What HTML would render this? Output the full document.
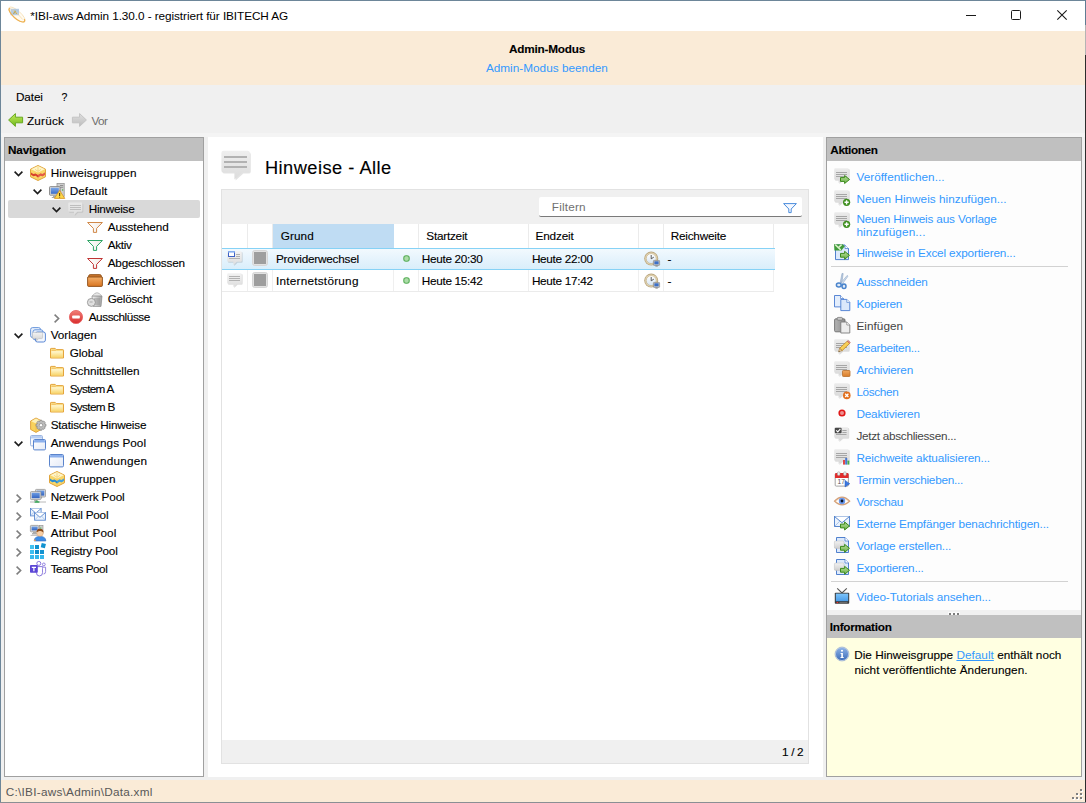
<!DOCTYPE html>
<html lang="de"><head><meta charset="utf-8"><title>IBI-aws Admin</title>
<style>
html,body{margin:0;padding:0;}
body{width:1086px;height:803px;overflow:hidden;background:#f0f0f0;font-family:"Liberation Sans", sans-serif;position:relative;}
.t{position:absolute;white-space:nowrap;}
.r{position:absolute;box-sizing:border-box;}
svg{overflow:visible;}
a{color:#3399ff;-webkit-text-stroke:0;}
</style></head>
<body>
<div class="r" style="left:0px;top:0px;width:1086px;height:803px;background:#f0f0f0;"></div>
<div class="r" style="left:0px;top:0px;width:1086px;height:31px;background:#ffffff;"></div>
<svg class="r" style="left:8px;top:6px;" width="18" height="18" viewBox="0 0 18 18"><ellipse cx="9" cy="8.6" rx="10.6" ry="3.7" transform="rotate(42 9 8.6)" fill="#fffaf0" stroke="#f6e0b4" stroke-width="0.8"/><rect x="2.6" y="2.8" width="8.4" height="6.4" fill="#a4c0de" opacity="0.8"/><path d="M5.6 8 L7 4.8 L8.6 8" fill="none" stroke="#b49830" stroke-width="0.9"/><path d="M1.8 2.6 Q-0.4 3 3.4 8.4 Q9 15.2 14.6 16 Q17.4 16 16.4 13.6" fill="none" stroke="#eeb050" stroke-width="1.2" stroke-linecap="round"/><path d="M3.6 3.2 Q9 6 14.6 13.4" fill="none" stroke="#f4d08c" stroke-width="0.7" opacity="0.8"/></svg>
<div class="t" id="t1" style="left:30.2px;top:9px;font-size:11.75px;line-height:13px;color:#000;-webkit-text-stroke:0.12px;letter-spacing:-0.064px;-webkit-text-stroke:0;">*IBI-aws Admin 1.30.0 - registriert für IBITECH AG</div>
<div class="r" style="left:966px;top:15px;width:10px;height:1px;background:#1a1a1a;"></div>
<div class="r" style="left:1011px;top:10px;width:10px;height:10px;background:transparent;border:1px solid #1a1a1a;border-radius:1.5px;"></div>
<svg class="r" style="left:1057px;top:10px;" width="10" height="10" viewBox="0 0 10 10"><path d="M0.3 0.3 L9.7 9.7 M9.7 0.3 L0.3 9.7" stroke="#1a1a1a" stroke-width="1.1" fill="none"/></svg>
<div class="r" style="left:0px;top:31px;width:1086px;height:54px;background:#faebd7;"></div>
<div class="t" id="t2" style="left:509.1px;top:42px;font-size:11.75px;line-height:13px;color:#000;font-weight:bold;-webkit-text-stroke:0.12px;letter-spacing:-0.212px;">Admin-Modus</div>
<div class="t" id="t3" style="left:485.9px;top:61px;font-size:11.75px;line-height:13px;color:#3399ff;letter-spacing:0.022px;">Admin-Modus beenden</div>
<div class="t" id="t4" style="left:15.9px;top:90px;font-size:11.75px;line-height:13px;color:#000;-webkit-text-stroke:0.12px;letter-spacing:-0.087px;">Datei</div>
<div class="t" id="t5" style="left:61.5px;top:91px;font-size:10.5px;line-height:12px;color:#000;-webkit-text-stroke:0.12px;">?</div>
<svg class="r" style="left:8px;top:113px;" width="15" height="14" viewBox="0 0 15 14"><defs><linearGradient id="g1" x1="0" y1="0" x2="0" y2="1"><stop offset="0" stop-color="#c8ec60"/><stop offset="1" stop-color="#6cb818"/></linearGradient></defs><path d="M0.6 7 L7.4 0.6 V4.2 H14.6 V9.8 H7.4 V13.4Z" fill="url(#g1)" stroke="#68a820" stroke-width="1" stroke-linejoin="round"/></svg>
<div class="t" id="t6" style="left:27.0px;top:114px;font-size:11.75px;line-height:13px;color:#000;-webkit-text-stroke:0.12px;letter-spacing:0.18px;">Zurück</div>
<svg class="r" style="left:72px;top:113px;" width="15" height="14" viewBox="0 0 15 14"><defs><linearGradient id="g2" x1="0" y1="0" x2="0" y2="1"><stop offset="0" stop-color="#e0e0e0"/><stop offset="1" stop-color="#bcbcbc"/></linearGradient></defs><path d="M14.4 7 L7.6 0.6 V4.2 H0.4 V9.8 H7.6 V13.4Z" fill="url(#g2)" stroke="#c4c4c4" stroke-width="1" stroke-linejoin="round"/></svg>
<div class="t" id="t7" style="left:91.4px;top:114px;font-size:11.75px;line-height:13px;color:#6d6d6d;letter-spacing:-0.614px;">Vor</div>
<div class="r" style="left:0px;top:133px;width:1086px;height:4px;background:#f4f4f4;"></div>
<div class="r" style="left:4px;top:137px;width:200px;height:640px;background:#ffffff;border:1px solid #a0a0a0;"></div>
<div class="r" style="left:5px;top:138px;width:198px;height:23px;background:#c0c0c0;"></div>
<div class="t" id="t8" style="left:8.1px;top:143px;font-size:11.75px;line-height:13px;color:#000;font-weight:bold;-webkit-text-stroke:0.12px;letter-spacing:-0.236px;">Navigation</div>
<div class="r" style="left:8px;top:200px;width:192px;height:18px;background:#d9d9d9;border-radius:2px;"></div>
<svg class="r" style="left:14px;top:171px;" width="9" height="6" viewBox="0 0 9 6"><path d="M0.6 0.6 L4.5 4.5 L8.4 0.6" fill="none" stroke="#1c1c1c" stroke-width="1.6"/></svg>
<svg class="r" style="left:30px;top:165px;" width="16" height="16" viewBox="0 0 16 16"><path d="M8 0.5 L15.5 4.2 V11.8 L8 15.5 L0.5 11.8 V4.2Z" fill="#f9d668" stroke="#e0a43c" stroke-width="1" stroke-linejoin="round"/><path d="M8 1 L14.8 4.3 L8 7.6 L1.2 4.3Z" fill="#fef4c8"/><path d="M8 7.8 V15" stroke="#ecbc50" stroke-width="0.6"/><path d="M1 7.6 L3.3 9 L5.6 8.5 L8 10 L10.4 8.5 L12.7 9 L15 7.6 V9.8 L12.7 11.3 L10.4 10.8 L8 12.4 L5.6 10.8 L3.3 11.3 L1 9.8Z" fill="#d8402e"/><path d="M8 10 L10.4 8.5 L12.7 9 L15 7.6 V9.8 L12.7 11.3 L10.4 10.8 L8 12.4Z" fill="#ee7060" opacity="0.55"/><path d="M8 1.6 V6.4 M5 4.3 L8 6.4 L11 4.3" stroke="#f2cc6c" stroke-width="0.7" fill="none"/></svg>
<div class="t" id="t9" style="left:50.7px;top:166px;font-size:11.75px;line-height:13px;color:#000;-webkit-text-stroke:0.12px;letter-spacing:0.119px;">Hinweisgruppen</div>
<svg class="r" style="left:33px;top:189px;" width="9" height="6" viewBox="0 0 9 6"><path d="M0.6 0.6 L4.5 4.5 L8.4 0.6" fill="none" stroke="#1c1c1c" stroke-width="1.6"/></svg>
<svg class="r" style="left:49px;top:183px;" width="16" height="16" viewBox="0 0 16 16"><defs><linearGradient id="g3" x1="0" y1="0" x2="0" y2="1"><stop offset="0" stop-color="#7ca8e8"/><stop offset="1" stop-color="#3c6cc8"/></linearGradient></defs><rect x="8" y="0.5" width="7.2" height="13" fill="#cfcfcf" stroke="#8c8c8c" stroke-width="0.7"/><rect x="11" y="2" width="3.2" height="0.9" fill="#888"/><rect x="11" y="3.8" width="3.2" height="0.9" fill="#888"/><rect x="13" y="6.4" width="1.2" height="1.2" fill="#40b040"/><rect x="0.5" y="3.6" width="10.6" height="8.6" rx="0.8" fill="#d8d8d8" stroke="#7a7a7a" stroke-width="0.8"/><rect x="1.8" y="4.8" width="8" height="6" fill="url(#g3)"/><path d="M4 12.4 H7.6 V14 H9 V15 H2.8 V14 H4Z" fill="#a8a8a8"/><path d="M10.6 7.4 L15.8 15.4 H5.4Z" fill="#fcd848" stroke="#d89020" stroke-width="0.8" stroke-linejoin="round"/><path d="M10.6 10 V13 M10.6 13.8 V14.6" stroke="#5a3c00" stroke-width="1.1"/></svg>
<div class="t" id="t10" style="left:69.7px;top:184px;font-size:11.75px;line-height:13px;color:#000;-webkit-text-stroke:0.12px;letter-spacing:0.078px;">Default</div>
<svg class="r" style="left:52px;top:207px;" width="9" height="6" viewBox="0 0 9 6"><path d="M0.6 0.6 L4.5 4.5 L8.4 0.6" fill="none" stroke="#1c1c1c" stroke-width="1.6"/></svg>
<svg class="r" style="left:68px;top:201px;" width="16" height="16" viewBox="0 0 16 16"><defs><linearGradient id="g4" x1="0" y1="0" x2="0" y2="1"><stop offset="0" stop-color="#e9e9e9"/><stop offset="1" stop-color="#dfdfdf"/></linearGradient></defs><path d="M2 2.4 H14.2 Q15.299999999999999 2.4 15.299999999999999 3.6 V10.6 Q15.299999999999999 11.8 14.2 11.8 H10.200000000000001 L6.8 15.0 V11.8 H2 Q0.9 11.8 0.9 10.6 V3.6 Q0.9 2.4 2 2.4Z" fill="#000" opacity="0.09"/><path d="M1.4 1.5999999999999999 H13.2 Q14.4 1.5999999999999999 14.4 2.8 V9.6 Q14.4 10.8 13.2 10.8 H9.4 L6 14.0 V10.8 H1.4 Q0.2 10.8 0.2 9.6 V2.8 Q0.2 1.5999999999999999 1.4 1.5999999999999999Z" fill="url(#g4)"/><rect x="2" y="4.0" width="11" height="1" fill="#bebebe"/><rect x="2" y="6.0" width="11" height="1" fill="#bebebe"/><rect x="2" y="8.0" width="11" height="1" fill="#bebebe"/></svg>
<div class="t" id="t11" style="left:88.7px;top:202px;font-size:11.75px;line-height:13px;color:#000;-webkit-text-stroke:0.12px;letter-spacing:-0.225px;">Hinweise</div>
<svg class="r" style="left:87px;top:219px;" width="16" height="16" viewBox="0 0 16 16"><defs><linearGradient id="g5" x1="0" y1="0" x2="1" y2="0"><stop offset="0" stop-color="#ffffff"/><stop offset="1" stop-color="#f2ece6"/></linearGradient></defs><path d="M0.6 3.5 H15.4 L9.6 9.4 V13.4 H6.4 V9.4Z" fill="url(#g5)" stroke="#d08848" stroke-width="1" stroke-linejoin="round"/></svg>
<div class="t" id="t12" style="left:107.7px;top:220px;font-size:11.75px;line-height:13px;color:#000;-webkit-text-stroke:0.12px;letter-spacing:-0.112px;">Ausstehend</div>
<svg class="r" style="left:87px;top:237px;" width="16" height="16" viewBox="0 0 16 16"><defs><linearGradient id="g6" x1="0" y1="0" x2="1" y2="0"><stop offset="0" stop-color="#ffffff"/><stop offset="1" stop-color="#f2ece6"/></linearGradient></defs><path d="M0.6 3.5 H15.4 L9.6 9.4 V13.4 H6.4 V9.4Z" fill="url(#g6)" stroke="#2ca464" stroke-width="1" stroke-linejoin="round"/></svg>
<div class="t" id="t13" style="left:107.7px;top:238px;font-size:11.75px;line-height:13px;color:#000;-webkit-text-stroke:0.12px;letter-spacing:-0.335px;">Aktiv</div>
<svg class="r" style="left:87px;top:255px;" width="16" height="16" viewBox="0 0 16 16"><defs><linearGradient id="g7" x1="0" y1="0" x2="1" y2="0"><stop offset="0" stop-color="#ffffff"/><stop offset="1" stop-color="#f2ece6"/></linearGradient></defs><path d="M0.6 3.5 H15.4 L9.6 9.4 V13.4 H6.4 V9.4Z" fill="url(#g7)" stroke="#c03434" stroke-width="1" stroke-linejoin="round"/></svg>
<div class="t" id="t14" style="left:107.7px;top:256px;font-size:11.75px;line-height:13px;color:#000;-webkit-text-stroke:0.12px;letter-spacing:-0.19px;">Abgeschlossen</div>
<svg class="r" style="left:87px;top:273px;" width="16" height="16" viewBox="0 0 16 16"><defs><linearGradient id="g8" x1="0" y1="0" x2="0" y2="1"><stop offset="0" stop-color="#f4b06a"/><stop offset="1" stop-color="#d87420"/></linearGradient></defs><path d="M1.6 3.2 Q1.6 1.6 3.2 1.6 H12.8 Q14.4 1.6 14.4 3.2 L15.4 4.6 H0.6Z" fill="#c8742c" stroke="#8c4c14" stroke-width="0.8"/><rect x="0.6" y="4" width="14.8" height="9.4" rx="1" fill="url(#g8)" stroke="#8c4c14" stroke-width="0.9"/></svg>
<div class="t" id="t15" style="left:107.7px;top:274px;font-size:11.75px;line-height:13px;color:#000;-webkit-text-stroke:0.12px;letter-spacing:-0.176px;">Archiviert</div>
<svg class="r" style="left:87px;top:291px;" width="16" height="16" viewBox="0 0 16 16"><defs><linearGradient id="g9" x1="0" y1="0" x2="1" y2="0"><stop offset="0" stop-color="#f4f4f4"/><stop offset="0.5" stop-color="#c8c8c8"/><stop offset="1" stop-color="#a0a0a0"/></linearGradient></defs><path d="M5 5 H15 L14 15.4 H6Z" fill="url(#g9)" stroke="#8a8a8a" stroke-width="0.7"/><path d="M8 7 V14 M10 7 V14 M12 7 V14" stroke="#8c8c8c" stroke-width="0.8"/><path d="M5.4 4.8 Q10 -1.4 14.6 4.8Z" fill="#e8e8e8" stroke="#9a9a9a" stroke-width="0.6"/><ellipse cx="4.4" cy="11.4" rx="4" ry="4" fill="#e0e0e0" stroke="#8c8c8c" stroke-width="0.8"/><path d="M2.6 11 H5.6" stroke="#a8a8a8" stroke-width="1"/></svg>
<div class="t" id="t16" style="left:107.7px;top:292px;font-size:11.75px;line-height:13px;color:#000;-webkit-text-stroke:0.12px;letter-spacing:-0.27px;">Gelöscht</div>
<svg class="r" style="left:54px;top:314px;" width="6" height="9" viewBox="0 0 6 9"><path d="M0.6 0.7 L4.6 4.5 L0.6 8.3" fill="none" stroke="#7e7e7e" stroke-width="1.6"/></svg>
<svg class="r" style="left:69px;top:310px;" width="14" height="14" viewBox="0 0 14 14"><defs><linearGradient id="g10" x1="0" y1="0" x2="0" y2="1"><stop offset="0" stop-color="#f08078"/><stop offset="1" stop-color="#d82c2c"/></linearGradient></defs><circle cx="7" cy="7" r="6.6" fill="url(#g10)" stroke="#e86060" stroke-width="0.8"/><rect x="3.2" y="5.6" width="7.6" height="2.8" rx="0.6" fill="#fff"/></svg>
<div class="t" id="t17" style="left:88.7px;top:310px;font-size:11.75px;line-height:13px;color:#000;-webkit-text-stroke:0.12px;letter-spacing:-0.433px;">Ausschlüsse</div>
<svg class="r" style="left:14px;top:333px;" width="9" height="6" viewBox="0 0 9 6"><path d="M0.6 0.6 L4.5 4.5 L8.4 0.6" fill="none" stroke="#1c1c1c" stroke-width="1.6"/></svg>
<svg class="r" style="left:30px;top:327px;" width="16" height="16" viewBox="0 0 16 16"><defs><linearGradient id="g11" x1="0" y1="0" x2="0" y2="1"><stop offset="0" stop-color="#f4f4f4"/><stop offset="1" stop-color="#cfcfcf"/></linearGradient></defs><rect x="0.6" y="0.6" width="10" height="10" rx="2" fill="#e8f0fc" stroke="#5a8cd8" stroke-width="0.9"/><rect x="3" y="2.8" width="10" height="10" rx="2" fill="#e8f0fc" stroke="#5a8cd8" stroke-width="0.9"/><rect x="5.4" y="5" width="10" height="10" rx="2" fill="#f4f8fe" stroke="#4a7cd0" stroke-width="0.9"/><path d="M3.4 5.4 H11.6 Q12.6 5.4 12.6 6.4 V10.6 Q12.6 11.6 11.6 11.6 H8.6 L6.6 13.8 V11.6 H3.4 Q2.4 11.6 2.4 10.6 V6.4 Q2.4 5.4 3.4 5.4Z" fill="url(#g11)" stroke="#b0b0b0" stroke-width="0.5"/></svg>
<div class="t" id="t18" style="left:50.7px;top:328px;font-size:11.75px;line-height:13px;color:#000;-webkit-text-stroke:0.12px;letter-spacing:-0.054px;">Vorlagen</div>
<svg class="r" style="left:49px;top:345px;" width="16" height="16" viewBox="0 0 16 16"><defs><linearGradient id="g12" x1="0" y1="0" x2="0" y2="1"><stop offset="0" stop-color="#fff8d4"/><stop offset="1" stop-color="#f8d468"/></linearGradient></defs><path d="M1.5 4 Q1.5 3.4 2.1 3.4 H6.2 L7.4 4.6 H13.8 Q14.5 4.6 14.5 5.2 V13 H1.5Z" fill="#fbe08c" stroke="#e4a43c" stroke-width="1" stroke-linejoin="round"/><rect x="2.3" y="6.2" width="11.4" height="6.3" fill="url(#g12)"/><path d="M2.6 5.3 H6.8" stroke="#eeb858" stroke-width="0.8"/></svg>
<div class="t" id="t19" style="left:69.7px;top:346px;font-size:11.75px;line-height:13px;color:#000;-webkit-text-stroke:0.12px;letter-spacing:-0.095px;">Global</div>
<svg class="r" style="left:49px;top:363px;" width="16" height="16" viewBox="0 0 16 16"><defs><linearGradient id="g13" x1="0" y1="0" x2="0" y2="1"><stop offset="0" stop-color="#fff8d4"/><stop offset="1" stop-color="#f8d468"/></linearGradient></defs><path d="M1.5 4 Q1.5 3.4 2.1 3.4 H6.2 L7.4 4.6 H13.8 Q14.5 4.6 14.5 5.2 V13 H1.5Z" fill="#fbe08c" stroke="#e4a43c" stroke-width="1" stroke-linejoin="round"/><rect x="2.3" y="6.2" width="11.4" height="6.3" fill="url(#g13)"/><path d="M2.6 5.3 H6.8" stroke="#eeb858" stroke-width="0.8"/></svg>
<div class="t" id="t20" style="left:69.7px;top:364px;font-size:11.75px;line-height:13px;color:#000;-webkit-text-stroke:0.12px;letter-spacing:0.003px;">Schnittstellen</div>
<svg class="r" style="left:49px;top:381px;" width="16" height="16" viewBox="0 0 16 16"><defs><linearGradient id="g14" x1="0" y1="0" x2="0" y2="1"><stop offset="0" stop-color="#fff8d4"/><stop offset="1" stop-color="#f8d468"/></linearGradient></defs><path d="M1.5 4 Q1.5 3.4 2.1 3.4 H6.2 L7.4 4.6 H13.8 Q14.5 4.6 14.5 5.2 V13 H1.5Z" fill="#fbe08c" stroke="#e4a43c" stroke-width="1" stroke-linejoin="round"/><rect x="2.3" y="6.2" width="11.4" height="6.3" fill="url(#g14)"/><path d="M2.6 5.3 H6.8" stroke="#eeb858" stroke-width="0.8"/></svg>
<div class="t" id="t21" style="left:69.7px;top:382px;font-size:11.75px;line-height:13px;color:#000;-webkit-text-stroke:0.12px;letter-spacing:-0.694px;">System A</div>
<svg class="r" style="left:49px;top:399px;" width="16" height="16" viewBox="0 0 16 16"><defs><linearGradient id="g15" x1="0" y1="0" x2="0" y2="1"><stop offset="0" stop-color="#fff8d4"/><stop offset="1" stop-color="#f8d468"/></linearGradient></defs><path d="M1.5 4 Q1.5 3.4 2.1 3.4 H6.2 L7.4 4.6 H13.8 Q14.5 4.6 14.5 5.2 V13 H1.5Z" fill="#fbe08c" stroke="#e4a43c" stroke-width="1" stroke-linejoin="round"/><rect x="2.3" y="6.2" width="11.4" height="6.3" fill="url(#g15)"/><path d="M2.6 5.3 H6.8" stroke="#eeb858" stroke-width="0.8"/></svg>
<div class="t" id="t22" style="left:69.7px;top:400px;font-size:11.75px;line-height:13px;color:#000;-webkit-text-stroke:0.12px;letter-spacing:-0.66px;">System B</div>
<svg class="r" style="left:30px;top:417px;" width="16" height="16" viewBox="0 0 16 16"><path d="M6 1 L11 3.6 V12.6 L6 15.4 L0.6 12.4 V4Z" fill="#f8d25c" stroke="#dc9c34" stroke-width="0.9" stroke-linejoin="round"/><path d="M6 1.4 L10.4 3.8 L6 6.4 L1.2 4.2Z" fill="#fdf0b8"/><path d="M6 6.4 V15" stroke="#e8b448" stroke-width="0.6"/><g transform="translate(11,8.2)"><path d="M-1 -5 H1 L1.4 -3.6 L2.8 -4.2 L4.2 -2.8 L3.6 -1.4 L5 -1 V1 L3.6 1.4 L4.2 2.8 L2.8 4.2 L1.4 3.6 L1 5 H-1 L-1.4 3.6 L-2.8 4.2 L-4.2 2.8 L-3.6 1.4 L-5 1 V-1 L-3.6 -1.4 L-4.2 -2.8 L-2.8 -4.2 L-1.4 -3.6Z" fill="#bcbcbc" stroke="#7c7c7c" stroke-width="0.6"/><circle r="1.7" fill="#fff" stroke="#7c7c7c" stroke-width="0.6"/></g></svg>
<div class="t" id="t23" style="left:50.7px;top:418px;font-size:11.75px;line-height:13px;color:#000;-webkit-text-stroke:0.12px;letter-spacing:-0.208px;">Statische Hinweise</div>
<svg class="r" style="left:14px;top:441px;" width="9" height="6" viewBox="0 0 9 6"><path d="M0.6 0.6 L4.5 4.5 L8.4 0.6" fill="none" stroke="#1c1c1c" stroke-width="1.6"/></svg>
<svg class="r" style="left:30px;top:435px;" width="16" height="16" viewBox="0 0 16 16"><defs><linearGradient id="g16" x1="0" y1="0" x2="1" y2="1"><stop offset="0" stop-color="#ffffff"/><stop offset="1" stop-color="#e4eaf6"/></linearGradient></defs><g opacity="0.6"><rect x="0.5" y="0.5" width="12" height="10.4" rx="1.2" fill="url(#g16)" stroke="#5a84cc" stroke-width="1"/><path d="M1.0 3.4 V1.9 Q1.0 1.0 1.9 1.0 H11.1 Q12.0 1.0 12.0 1.9 V3.4Z" fill="#8cb0ec"/></g><defs><linearGradient id="g17" x1="0" y1="0" x2="1" y2="1"><stop offset="0" stop-color="#ffffff"/><stop offset="1" stop-color="#e4eaf6"/></linearGradient></defs><g opacity="1"><rect x="3.5" y="4.5" width="12" height="10.4" rx="1.2" fill="url(#g17)" stroke="#5a84cc" stroke-width="1"/><path d="M4.0 7.4 V5.9 Q4.0 5.0 4.9 5.0 H14.1 Q15.0 5.0 15.0 5.9 V7.4Z" fill="#8cb0ec"/></g></svg>
<div class="t" id="t24" style="left:50.7px;top:436px;font-size:11.75px;line-height:13px;color:#000;-webkit-text-stroke:0.12px;letter-spacing:0.045px;">Anwendungs Pool</div>
<svg class="r" style="left:49px;top:453px;" width="16" height="16" viewBox="0 0 16 16"><defs><linearGradient id="g18" x1="0" y1="0" x2="1" y2="1"><stop offset="0" stop-color="#ffffff"/><stop offset="1" stop-color="#e4eaf6"/></linearGradient></defs><g opacity="1"><rect x="0.5" y="1.5" width="14" height="12.4" rx="1.2" fill="url(#g18)" stroke="#5a84cc" stroke-width="1"/><path d="M1.0 4.4 V2.9 Q1.0 2.0 1.9 2.0 H13.1 Q14.0 2.0 14.0 2.9 V4.4Z" fill="#8cb0ec"/></g></svg>
<div class="t" id="t25" style="left:69.7px;top:454px;font-size:11.75px;line-height:13px;color:#000;-webkit-text-stroke:0.12px;letter-spacing:0.216px;">Anwendungen</div>
<svg class="r" style="left:49px;top:471px;" width="16" height="16" viewBox="0 0 16 16"><path d="M8 0.5 L15.5 4.2 V11.8 L8 15.5 L0.5 11.8 V4.2Z" fill="#f9d668" stroke="#e0a43c" stroke-width="1" stroke-linejoin="round"/><path d="M8 1 L14.8 4.3 L8 7.6 L1.2 4.3Z" fill="#fef4c8"/><path d="M8 7.8 V15" stroke="#ecbc50" stroke-width="0.6"/><path d="M1 7.6 L3.3 9 L5.6 8.5 L8 10 L10.4 8.5 L12.7 9 L15 7.6 V9.8 L12.7 11.3 L10.4 10.8 L8 12.4 L5.6 10.8 L3.3 11.3 L1 9.8Z" fill="#2c8cd0"/><path d="M8 10 L10.4 8.5 L12.7 9 L15 7.6 V9.8 L12.7 11.3 L10.4 10.8 L8 12.4Z" fill="#58b0e8" opacity="0.55"/><path d="M8 1.6 V6.4 M5 4.3 L8 6.4 L11 4.3" stroke="#f2cc6c" stroke-width="0.7" fill="none"/></svg>
<div class="t" id="t26" style="left:69.7px;top:472px;font-size:11.75px;line-height:13px;color:#000;-webkit-text-stroke:0.12px;letter-spacing:0.006px;">Gruppen</div>
<svg class="r" style="left:16px;top:494px;" width="6" height="9" viewBox="0 0 6 9"><path d="M0.6 0.7 L4.6 4.5 L0.6 8.3" fill="none" stroke="#7e7e7e" stroke-width="1.6"/></svg>
<svg class="r" style="left:30px;top:489px;" width="16" height="16" viewBox="0 0 16 16"><defs><linearGradient id="g19" x1="0" y1="0" x2="0" y2="1"><stop offset="0" stop-color="#6c9ce4"/><stop offset="1" stop-color="#3464c0"/></linearGradient></defs><rect x="5.5" y="0.4" width="10" height="7.6" rx="0.8" fill="#dcdcdc" stroke="#8c8c8c" stroke-width="0.7"/><rect x="6.7" y="1.6" width="7.6" height="5.0" fill="url(#g19)"/><rect x="8.9" y="8.0" width="3.2" height="1.4" fill="#a8a8a8"/><defs><linearGradient id="g20" x1="0" y1="0" x2="0" y2="1"><stop offset="0" stop-color="#6c9ce4"/><stop offset="1" stop-color="#3464c0"/></linearGradient></defs><rect x="0.5" y="2.6" width="10.4" height="8" rx="0.8" fill="#dcdcdc" stroke="#8c8c8c" stroke-width="0.7"/><rect x="1.7" y="3.8" width="8.0" height="5.4" fill="url(#g20)"/><rect x="4.1" y="10.6" width="3.2" height="1.4" fill="#a8a8a8"/><path d="M0 13 H16" stroke="#b8b8b8" stroke-width="1"/><path d="M7 11.6 V13 M4.6 13 H9.4" stroke="#38a858" stroke-width="1.4"/></svg>
<div class="t" id="t27" style="left:50.7px;top:490px;font-size:11.75px;line-height:13px;color:#000;-webkit-text-stroke:0.12px;letter-spacing:-0.149px;">Netzwerk Pool</div>
<svg class="r" style="left:16px;top:512px;" width="6" height="9" viewBox="0 0 6 9"><path d="M0.6 0.7 L4.6 4.5 L0.6 8.3" fill="none" stroke="#7e7e7e" stroke-width="1.6"/></svg>
<svg class="r" style="left:30px;top:507px;" width="16" height="16" viewBox="0 0 16 16"><rect x="0.5" y="1.5" width="10.6" height="7.4" fill="#eaf2fc" stroke="#4a7cc8" stroke-width="0.8"/><path d="M0.5 1.5 L5.8 6.088 L11.1 1.5" fill="#fff" stroke="#4a7cc8" stroke-width="0.8"/><path d="M0.5 8.9 L4.316 4.83 M11.1 8.9 L7.284 4.83" fill="none" stroke="#8fb2e4" stroke-width="0.6400000000000001"/><rect x="4.6" y="5.6" width="10.8" height="7.6" fill="#eaf2fc" stroke="#4a7cc8" stroke-width="0.8"/><path d="M4.6 5.6 L10.0 10.312 L15.4 5.6" fill="#fff" stroke="#4a7cc8" stroke-width="0.8"/><path d="M4.6 13.2 L8.488 9.02 M15.4 13.2 L11.512 9.02" fill="none" stroke="#8fb2e4" stroke-width="0.6400000000000001"/></svg>
<div class="t" id="t28" style="left:50.7px;top:508px;font-size:11.75px;line-height:13px;color:#000;-webkit-text-stroke:0.12px;letter-spacing:-0.222px;">E-Mail Pool</div>
<svg class="r" style="left:16px;top:530px;" width="6" height="9" viewBox="0 0 6 9"><path d="M0.6 0.7 L4.6 4.5 L0.6 8.3" fill="none" stroke="#7e7e7e" stroke-width="1.6"/></svg>
<svg class="r" style="left:30px;top:525px;" width="16" height="16" viewBox="0 0 16 16"><defs><linearGradient id="g21" x1="0" y1="0" x2="0" y2="1"><stop offset="0" stop-color="#6c9ce4"/><stop offset="1" stop-color="#3464c0"/></linearGradient></defs><rect x="0.4" y="0.4" width="8.4" height="6.4" rx="0.8" fill="#dcdcdc" stroke="#8c8c8c" stroke-width="0.7"/><rect x="1.6" y="1.6" width="6.0" height="3.8000000000000003" fill="url(#g21)"/><rect x="3.0000000000000004" y="6.800000000000001" width="3.2" height="1.4" fill="#a8a8a8"/><rect x="9.6" y="0.4" width="3.4" height="8" fill="#d0d0d0" stroke="#8c8c8c" stroke-width="0.6"/><rect x="2" y="8.2" width="5" height="1.2" fill="#9c9c9c"/><rect x="0.6" y="9.8" width="7" height="1.2" fill="#c4c4c4"/><path d="M4.2 16 Q4.2 11.4 10 11.4 Q15.8 11.4 15.8 16Z" fill="#3c8ce8" stroke="#2868c0" stroke-width="0.6"/><circle cx="10" cy="8" r="3.3" fill="#f8d0a8" stroke="#c89060" stroke-width="0.4"/><path d="M6.6 7.6 Q6.4 3.6 10 3.8 Q13.8 3.8 13.4 7.6 Q12 5.8 10 6 Q8 5.8 6.6 7.6Z" fill="#8c4c1c"/><path d="M10 3.6 L11 1.8 L11.4 3.8Z" fill="#40b040"/><rect x="4" y="14.6" width="1.6" height="1.4" fill="#f0a050"/></svg>
<div class="t" id="t29" style="left:50.7px;top:526px;font-size:11.75px;line-height:13px;color:#000;-webkit-text-stroke:0.12px;letter-spacing:0.139px;">Attribut Pool</div>
<svg class="r" style="left:16px;top:548px;" width="6" height="9" viewBox="0 0 6 9"><path d="M0.6 0.7 L4.6 4.5 L0.6 8.3" fill="none" stroke="#7e7e7e" stroke-width="1.6"/></svg>
<svg class="r" style="left:30px;top:543px;" width="16" height="16" viewBox="0 0 16 16"><rect x="0" y="2" width="4" height="4" fill="#44c2f1"/><rect x="5" y="2" width="4" height="4" fill="#1192d0"/><rect x="0" y="7" width="4" height="4" fill="#3fbef0"/><rect x="5" y="7" width="4" height="4" fill="#0f8ecc"/><rect x="10" y="7" width="4" height="4" fill="#1593d0"/><rect x="0" y="12" width="4" height="4" fill="#3ab9ee"/><rect x="5" y="12" width="4" height="4" fill="#34b5ec"/><rect x="10" y="12" width="4" height="4" fill="#36b7ec"/><rect x="11.2" y="0.5" width="4.3" height="4.3" fill="#1192d0" transform="rotate(14 13.3 2.6)"/></svg>
<div class="t" id="t30" style="left:50.7px;top:544px;font-size:11.75px;line-height:13px;color:#000;-webkit-text-stroke:0.12px;letter-spacing:-0.235px;">Registry Pool</div>
<svg class="r" style="left:16px;top:566px;" width="6" height="9" viewBox="0 0 6 9"><path d="M0.6 0.7 L4.6 4.5 L0.6 8.3" fill="none" stroke="#7e7e7e" stroke-width="1.6"/></svg>
<svg class="r" style="left:30px;top:561px;" width="16" height="16" viewBox="0 0 16 16"><circle cx="8.8" cy="2.4" r="2" fill="#fff" stroke="#7c68d8" stroke-width="0.9"/><circle cx="13.8" cy="3.4" r="1.4" fill="#fff" stroke="#7c68d8" stroke-width="0.8"/><path d="M6.4 5.6 H12.6 V11.4 Q12.6 15 9.4 15 Q6.4 15 6.4 11.4Z" fill="#fff" stroke="#7c68d8" stroke-width="0.9"/><path d="M12.6 6.2 H15.6 V10.6 Q15.6 13 13.6 13" fill="#fff" stroke="#7c68d8" stroke-width="0.8"/><rect x="0" y="4" width="7.8" height="7.8" rx="0.8" fill="#5b45d6"/><path d="M1.8 5.8 H6 V7 H4.5 V10.2 H3.3 V7 H1.8Z" fill="#fff"/></svg>
<div class="t" id="t31" style="left:50.7px;top:562px;font-size:11.75px;line-height:13px;color:#000;-webkit-text-stroke:0.12px;letter-spacing:-0.478px;">Teams Pool</div>
<div class="r" style="left:208px;top:137px;width:615px;height:640px;background:#ffffff;"></div>
<svg class="r" style="left:221px;top:150px;" width="31" height="31" viewBox="0 0 31 31"><defs><linearGradient id="g22" x1="0" y1="0" x2="0" y2="1"><stop offset="0" stop-color="#efefef"/><stop offset="1" stop-color="#dcdcdc"/></linearGradient></defs><path d="M3 2.2 H27.6 Q29.8 2.2 29.8 4.4 V21.4 Q29.8 23.6 27.6 23.6 H22.4 L14.6 30.4 V23.6 H3.4 Q1.6 23.6 1.6 21.4 V4.4 Q1.6 2.2 3 2.2Z" fill="#000" opacity="0.11"/><path d="M2.6 0.8 H26.6 Q28.8 0.8 28.8 3 V20.4 Q28.8 22.6 26.6 22.6 H21.2 L13.4 29.6 V22.6 H2.6 Q0.4 22.6 0.4 20.4 V3 Q0.4 0.8 2.6 0.8Z" fill="url(#g22)"/><rect x="3" y="6" width="23" height="2" fill="#b2b2b2"/><rect x="3" y="11" width="23" height="2" fill="#b2b2b2"/><rect x="3" y="16" width="23" height="2" fill="#b2b2b2"/></svg>
<div class="t" id="t32" style="left:264.9px;top:157px;font-size:18.25px;line-height:21px;color:#000;-webkit-text-stroke:0.12px;letter-spacing:0.477px;">Hinweise - Alle</div>
<div class="r" style="left:221px;top:189px;width:588px;height:575px;background:#ffffff;border:1px solid #e2e2e2;"></div>
<div class="r" style="left:222px;top:190px;width:586px;height:34px;background:#f0f0f0;"></div>
<div class="r" style="left:539px;top:197px;width:263px;height:20px;background:#ffffff;border-bottom:1px solid #7a7a7a;border-radius:2px;"></div>
<div class="t" id="t33" style="left:551.8px;top:200px;font-size:11.75px;line-height:13px;color:#707070;letter-spacing:0.18px;">Filtern</div>
<svg class="r" style="left:783px;top:203px;" width="14" height="10" viewBox="0 0 14 10"><path d="M0.6 0.6 H13.4 L8.2 6 V9.6 H5.8 V6Z" fill="#f4f8ff" stroke="#4a8cdc" stroke-width="1" stroke-linejoin="round"/></svg>
<div class="r" style="left:273px;top:224px;width:121px;height:24px;background:#bfdcf3;"></div>
<div class="r" style="left:247px;top:224px;width:1px;height:24px;background:#ebebeb;"></div>
<div class="r" style="left:272px;top:224px;width:1px;height:24px;background:#ebebeb;"></div>
<div class="r" style="left:418px;top:224px;width:1px;height:24px;background:#ebebeb;"></div>
<div class="r" style="left:528px;top:224px;width:1px;height:24px;background:#ebebeb;"></div>
<div class="r" style="left:638px;top:224px;width:1px;height:24px;background:#ebebeb;"></div>
<div class="r" style="left:663px;top:224px;width:1px;height:24px;background:#ebebeb;"></div>
<div class="r" style="left:773px;top:224px;width:1px;height:24px;background:#ebebeb;"></div>
<div class="t" id="t34" style="left:280.8px;top:229px;font-size:11.75px;line-height:13px;color:#000;-webkit-text-stroke:0.12px;letter-spacing:0.066px;">Grund</div>
<div class="t" id="t35" style="left:426.3px;top:229px;font-size:11.75px;line-height:13px;color:#000;-webkit-text-stroke:0.12px;letter-spacing:-0.228px;">Startzeit</div>
<div class="t" id="t36" style="left:535.6px;top:229px;font-size:11.75px;line-height:13px;color:#000;-webkit-text-stroke:0.12px;letter-spacing:-0.176px;">Endzeit</div>
<div class="t" id="t37" style="left:670.7px;top:229px;font-size:11.75px;line-height:13px;color:#000;-webkit-text-stroke:0.12px;letter-spacing:-0.212px;">Reichweite</div>
<div class="r" style="left:222px;top:248px;width:553px;height:22px;background:#e6f4fc;border-top:1px solid #86d2f6;border-bottom:1px solid #86d2f6;background:linear-gradient(#f2f9fe,#d9eefb);"></div>
<div class="r" style="left:247px;top:270px;width:1px;height:21px;background:#efefef;"></div>
<div class="r" style="left:272px;top:270px;width:1px;height:21px;background:#efefef;"></div>
<div class="r" style="left:393px;top:270px;width:1px;height:21px;background:#efefef;"></div>
<div class="r" style="left:418px;top:270px;width:1px;height:21px;background:#efefef;"></div>
<div class="r" style="left:528px;top:270px;width:1px;height:21px;background:#efefef;"></div>
<div class="r" style="left:638px;top:270px;width:1px;height:21px;background:#efefef;"></div>
<div class="r" style="left:663px;top:270px;width:1px;height:21px;background:#efefef;"></div>
<div class="r" style="left:773px;top:270px;width:1px;height:21px;background:#efefef;"></div>
<div class="r" style="left:222px;top:291px;width:552px;height:1px;background:#ebebeb;"></div>
<svg class="r" style="left:227px;top:251px;" width="16" height="16" viewBox="0 0 16 16"><defs><linearGradient id="g23" x1="0" y1="0" x2="0" y2="1"><stop offset="0" stop-color="#f2f2f2"/><stop offset="1" stop-color="#dedede"/></linearGradient></defs><path d="M2 1 H14.6 Q15.7 1 15.7 2.2 V10.6 Q15.7 11.8 14.6 11.8 H10.600000000000001 L7.2 15 V11.8 H2 Q0.9 11.8 0.9 10.6 V2.2 Q0.9 1 2 1Z" fill="#000" opacity="0.13"/><path d="M1.4 0.2 H13.6 Q14.8 0.2 14.8 1.4 V9.6 Q14.8 10.8 13.6 10.8 H9.8 L6.4 14 V10.8 H1.4 Q0.2 10.8 0.2 9.6 V1.4 Q0.2 0.2 1.4 0.2Z" fill="url(#g23)"/><rect x="2" y="7" width="11" height="1" fill="#b2b2b2"/><rect x="9" y="3" width="4" height="1" fill="#b2b2b2"/><rect x="9" y="5" width="4" height="1" fill="#b2b2b2"/><rect x="1.5" y="0.5" width="6" height="5" fill="#fff" stroke="#3f62c4" stroke-width="1"/><rect x="1" y="0" width="7" height="1.6" fill="#86aef0"/></svg>
<svg class="r" style="left:252px;top:250px;" width="16" height="16" viewBox="0 0 16 16"><rect x="0.5" y="0.5" width="15" height="15" rx="2.2" fill="#e2e2e2" stroke="#d6d6d6" stroke-width="1"/><rect x="2" y="2" width="12" height="12" fill="#9e9e9e"/></svg>
<div class="t" id="t38" style="left:276.0px;top:252px;font-size:11.75px;line-height:13px;color:#000;-webkit-text-stroke:0.12px;letter-spacing:-0.218px;">Providerwechsel</div>
<svg class="r" style="left:403px;top:255px;" width="7" height="7" viewBox="0 0 7 7"><rect x="0.8" y="0.8" width="5.4" height="5.4" rx="2.2" fill="#acdca8" stroke="#58ae58" stroke-width="1.1"/></svg>
<div class="t" id="t39" style="left:421.8px;top:252px;font-size:11.75px;line-height:13px;color:#000;-webkit-text-stroke:0.12px;letter-spacing:-0.299px;">Heute 20:30</div>
<div class="t" id="t40" style="left:531.9px;top:252px;font-size:11.75px;line-height:13px;color:#000;-webkit-text-stroke:0.12px;letter-spacing:-0.281px;">Heute 22:00</div>
<svg class="r" style="left:644px;top:251px;" width="16" height="16" viewBox="0 0 16 16"><defs><linearGradient id="g24" x1="0" y1="0" x2="0" y2="1"><stop offset="0" stop-color="#ffffff"/><stop offset="1" stop-color="#d4e4f4"/></linearGradient></defs><circle cx="7.2" cy="7.6" r="7" fill="#bca880"/><circle cx="7.2" cy="7.6" r="6.1" fill="#e4d8b8"/><circle cx="7.2" cy="7.6" r="5" fill="url(#g24)" stroke="#b89c60" stroke-width="0.5"/><path d="M7.2 4 V7.8 L9.8 6.2" fill="none" stroke="#4c4c4c" stroke-width="0.9"/><rect x="9.4" y="9.4" width="6.2" height="5" rx="0.6" fill="#c8c8c8" stroke="#7c7c7c" stroke-width="0.6"/><rect x="10.4" y="10.3" width="4.2" height="3" fill="#3c70c8"/><rect x="11.4" y="14.4" width="2.4" height="1.2" fill="#8c8c8c"/></svg>
<div class="t" id="t41" style="left:667.4px;top:252px;font-size:11.75px;line-height:13px;color:#000;-webkit-text-stroke:0.12px;">-</div>
<svg class="r" style="left:227px;top:273px;" width="16" height="16" viewBox="0 0 16 16"><defs><linearGradient id="g25" x1="0" y1="0" x2="0" y2="1"><stop offset="0" stop-color="#f2f2f2"/><stop offset="1" stop-color="#dedede"/></linearGradient></defs><path d="M2 1 H14.6 Q15.7 1 15.7 2.2 V10.6 Q15.7 11.8 14.6 11.8 H10.600000000000001 L7.2 15 V11.8 H2 Q0.9 11.8 0.9 10.6 V2.2 Q0.9 1 2 1Z" fill="#000" opacity="0.13"/><path d="M1.4 0.2 H13.6 Q14.8 0.2 14.8 1.4 V9.6 Q14.8 10.8 13.6 10.8 H9.8 L6.4 14 V10.8 H1.4 Q0.2 10.8 0.2 9.6 V1.4 Q0.2 0.2 1.4 0.2Z" fill="url(#g25)"/><rect x="2" y="3" width="11" height="1" fill="#b2b2b2"/><rect x="2" y="5" width="11" height="1" fill="#b2b2b2"/><rect x="2" y="7" width="11" height="1" fill="#b2b2b2"/></svg>
<svg class="r" style="left:252px;top:272px;" width="16" height="16" viewBox="0 0 16 16"><rect x="0.5" y="0.5" width="15" height="15" rx="2.2" fill="#e2e2e2" stroke="#d6d6d6" stroke-width="1"/><rect x="2" y="2" width="12" height="12" fill="#9e9e9e"/></svg>
<div class="t" id="t42" style="left:275.9px;top:274px;font-size:11.75px;line-height:13px;color:#000;-webkit-text-stroke:0.12px;letter-spacing:0.25px;">Internetstörung</div>
<svg class="r" style="left:403px;top:277px;" width="7" height="7" viewBox="0 0 7 7"><rect x="0.8" y="0.8" width="5.4" height="5.4" rx="2.2" fill="#acdca8" stroke="#58ae58" stroke-width="1.1"/></svg>
<div class="t" id="t43" style="left:421.8px;top:274px;font-size:11.75px;line-height:13px;color:#000;-webkit-text-stroke:0.12px;letter-spacing:-0.299px;">Heute 15:42</div>
<div class="t" id="t44" style="left:531.9px;top:274px;font-size:11.75px;line-height:13px;color:#000;-webkit-text-stroke:0.12px;letter-spacing:-0.281px;">Heute 17:42</div>
<svg class="r" style="left:644px;top:273px;" width="16" height="16" viewBox="0 0 16 16"><defs><linearGradient id="g26" x1="0" y1="0" x2="0" y2="1"><stop offset="0" stop-color="#ffffff"/><stop offset="1" stop-color="#d4e4f4"/></linearGradient></defs><circle cx="7.2" cy="7.6" r="7" fill="#bca880"/><circle cx="7.2" cy="7.6" r="6.1" fill="#e4d8b8"/><circle cx="7.2" cy="7.6" r="5" fill="url(#g26)" stroke="#b89c60" stroke-width="0.5"/><path d="M7.2 4 V7.8 L9.8 6.2" fill="none" stroke="#4c4c4c" stroke-width="0.9"/><rect x="9.4" y="9.4" width="6.2" height="5" rx="0.6" fill="#c8c8c8" stroke="#7c7c7c" stroke-width="0.6"/><rect x="10.4" y="10.3" width="4.2" height="3" fill="#3c70c8"/><rect x="11.4" y="14.4" width="2.4" height="1.2" fill="#8c8c8c"/></svg>
<div class="t" id="t45" style="left:667.4px;top:274px;font-size:11.75px;line-height:13px;color:#000;-webkit-text-stroke:0.12px;">-</div>
<div class="r" style="left:222px;top:740px;width:586px;height:23px;background:#f0f0f0;"></div>
<div class="t" id="t46" style="left:782.0px;top:745px;font-size:11.75px;line-height:13px;color:#000;-webkit-text-stroke:0.12px;letter-spacing:-0.335px;">1 / 2</div>
<div class="r" style="left:826px;top:137px;width:256px;height:640px;background:#fdfdfd;border:1px solid #a0a0a0;"></div>
<div class="r" style="left:827px;top:138px;width:254px;height:23px;background:#c0c0c0;"></div>
<div class="t" id="t47" style="left:830.3px;top:143px;font-size:11.75px;line-height:13px;color:#000;font-weight:bold;-webkit-text-stroke:0.12px;letter-spacing:-0.382px;">Aktionen</div>
<svg class="r" style="left:834px;top:168px;" width="16" height="16" viewBox="0 0 16 16"><defs><linearGradient id="g27" x1="0" y1="0" x2="0" y2="1"><stop offset="0" stop-color="#ececec"/><stop offset="1" stop-color="#d8d8d8"/></linearGradient></defs><path d="M2 1 H14.6 Q15.7 1 15.7 2.2 V11.6 Q15.7 12.8 14.6 12.8 H9.200000000000001 L5.3999999999999995 16 V12.8 H2 Q0.9 12.8 0.9 11.6 V2.2 Q0.9 1 2 1Z" fill="#000" opacity="0.13"/><path d="M1.4 0.2 H13.6 Q14.8 0.2 14.8 1.4 V10.6 Q14.8 11.8 13.6 11.8 H8.4 L4.6 15 V11.8 H1.4 Q0.2 11.8 0.2 10.6 V1.4 Q0.2 0.2 1.4 0.2Z" fill="url(#g27)"/><rect x="2" y="4" width="11" height="1" fill="#a6a6a6"/><rect x="2" y="6" width="11" height="1" fill="#a6a6a6"/><rect x="2" y="8" width="11" height="1" fill="#a6a6a6"/><defs><linearGradient id="g28" x1="0" y1="0" x2="0" y2="1"><stop offset="0" stop-color="#b6dc98"/><stop offset="1" stop-color="#6cb24a"/></linearGradient></defs><path transform="translate(6,7)" d="M0.5 2.6 H4.6 V0.5 L9.5 4.5 L4.6 8.5 V6.4 H0.5Z" fill="url(#g28)" stroke="#3c8a1c" stroke-width="1" stroke-linejoin="round"/></svg>
<div class="t" id="t48" style="left:856.4px;top:170px;font-size:11.75px;line-height:13px;color:#3399ff;letter-spacing:0.05px;">Veröffentlichen...</div>
<svg class="r" style="left:834px;top:190px;" width="16" height="16" viewBox="0 0 16 16"><defs><linearGradient id="g29" x1="0" y1="0" x2="0" y2="1"><stop offset="0" stop-color="#ececec"/><stop offset="1" stop-color="#d8d8d8"/></linearGradient></defs><path d="M2 1 H14.6 Q15.7 1 15.7 2.2 V11.6 Q15.7 12.8 14.6 12.8 H9.200000000000001 L5.3999999999999995 16 V12.8 H2 Q0.9 12.8 0.9 11.6 V2.2 Q0.9 1 2 1Z" fill="#000" opacity="0.13"/><path d="M1.4 0.2 H13.6 Q14.8 0.2 14.8 1.4 V10.6 Q14.8 11.8 13.6 11.8 H8.4 L4.6 15 V11.8 H1.4 Q0.2 11.8 0.2 10.6 V1.4 Q0.2 0.2 1.4 0.2Z" fill="url(#g29)"/><rect x="2" y="4" width="11" height="1" fill="#a6a6a6"/><rect x="2" y="6" width="11" height="1" fill="#a6a6a6"/><rect x="2" y="8" width="11" height="1" fill="#a6a6a6"/><circle cx="12.6" cy="12.3" r="3.6" fill="#3f8f1f"/><path d="M10.5 12.3 H14.7 M12.6 10.200000000000001 V14.4" stroke="#fff" stroke-width="1.4"/></svg>
<div class="t" id="t49" style="left:856.4px;top:192px;font-size:11.75px;line-height:13px;color:#3399ff;letter-spacing:0.022px;">Neuen Hinweis hinzufügen...</div>
<svg class="r" style="left:834px;top:212px;" width="16" height="16" viewBox="0 0 16 16"><defs><linearGradient id="g30" x1="0" y1="0" x2="0" y2="1"><stop offset="0" stop-color="#ececec"/><stop offset="1" stop-color="#d8d8d8"/></linearGradient></defs><path d="M2 1 H14.6 Q15.7 1 15.7 2.2 V11.6 Q15.7 12.8 14.6 12.8 H9.200000000000001 L5.3999999999999995 16 V12.8 H2 Q0.9 12.8 0.9 11.6 V2.2 Q0.9 1 2 1Z" fill="#000" opacity="0.13"/><path d="M1.4 0.2 H13.6 Q14.8 0.2 14.8 1.4 V10.6 Q14.8 11.8 13.6 11.8 H8.4 L4.6 15 V11.8 H1.4 Q0.2 11.8 0.2 10.6 V1.4 Q0.2 0.2 1.4 0.2Z" fill="url(#g30)"/><rect x="2" y="4" width="11" height="1" fill="#a6a6a6"/><rect x="2" y="6" width="11" height="1" fill="#a6a6a6"/><rect x="2" y="8" width="11" height="1" fill="#a6a6a6"/><circle cx="12.6" cy="12.3" r="3.6" fill="#3f8f1f"/><path d="M10.5 12.3 H14.7 M12.6 10.200000000000001 V14.4" stroke="#fff" stroke-width="1.4"/></svg>
<div class="t" id="t50" style="left:856.4px;top:225px;font-size:11.75px;line-height:13px;color:#3399ff;letter-spacing:0.147px;">hinzufügen...</div>
<div class="t" id="t51" style="left:856.4px;top:212px;font-size:11.75px;line-height:13px;color:#3399ff;letter-spacing:-0.166px;">Neuen Hinweis aus Vorlage</div>
<svg class="r" style="left:834px;top:244px;" width="16" height="16" viewBox="0 0 16 16"><path d="M1.5 1 H11.0 L14.5 4.5 V15.6 H1.5Z" fill="#dce9fb" stroke="#3f74c8" stroke-width="0.9" stroke-linejoin="round"/><path d="M11.0 1 V4.5 H14.5" fill="#fff" stroke="#3f74c8" stroke-width="0.7" stroke-linejoin="round"/><path d="M0 0.2 H8.6 L10.8 2.2 L7.4 6.4 H0.4Z" fill="#3f9a3a"/><path d="M1.2 0.6 L6.8 6 M7.6 0.6 L3.8 4.2" stroke="#d8f0c8" stroke-width="1.5" fill="none"/><defs><linearGradient id="g31" x1="0" y1="0" x2="0" y2="1"><stop offset="0" stop-color="#b6dc98"/><stop offset="1" stop-color="#6cb24a"/></linearGradient></defs><path transform="translate(6,6.8)" d="M0.5 2.6 H4.6 V0.5 L9.5 4.5 L4.6 8.5 V6.4 H0.5Z" fill="url(#g31)" stroke="#3c8a1c" stroke-width="1" stroke-linejoin="round"/></svg>
<div class="t" id="t52" style="left:856.4px;top:246px;font-size:11.75px;line-height:13px;color:#3399ff;letter-spacing:-0.148px;">Hinweise in Excel exportieren...</div>
<svg class="r" style="left:834px;top:273px;" width="16" height="16" viewBox="0 0 16 16"><path d="M8 0.4 L9.2 0.6 L7.8 10 L6.2 9.6Z" fill="#bccce0" stroke="#7c98bc" stroke-width="0.5"/><path d="M13.2 2.4 L14 3.2 L8.6 10.6 L7.2 9.6Z" fill="#d4e0ee" stroke="#7c98bc" stroke-width="0.5"/><ellipse cx="4.8" cy="12" rx="2.4" ry="2" fill="#c4d8f0" fill-opacity="0.5" stroke="#4a84cc" stroke-width="1.5"/><ellipse cx="10" cy="13.2" rx="2" ry="2.3" fill="#c4d8f0" fill-opacity="0.5" stroke="#4a84cc" stroke-width="1.5"/></svg>
<div class="t" id="t53" style="left:856.4px;top:275px;font-size:11.75px;line-height:13px;color:#3399ff;letter-spacing:-0.221px;">Ausschneiden</div>
<svg class="r" style="left:834px;top:295px;" width="16" height="16" viewBox="0 0 16 16"><path d="M0.5 0.5 H6.5 L9.5 3.5 V11.9 H0.5Z" fill="#e4eefc" stroke="#4a7cd0" stroke-width="0.9" stroke-linejoin="round"/><path d="M6.5 0.5 V3.5 H9.5" fill="#fff" stroke="#4a7cd0" stroke-width="0.7" stroke-linejoin="round"/><path d="M6.8 4.4 H12.8 L15.8 7.4 V15.6 H6.8Z" fill="#dbe8fb" stroke="#4a7cd0" stroke-width="0.9" stroke-linejoin="round"/><path d="M12.8 4.4 V7.4 H15.8" fill="#fff" stroke="#4a7cd0" stroke-width="0.7" stroke-linejoin="round"/></svg>
<div class="t" id="t54" style="left:856.4px;top:297px;font-size:11.75px;line-height:13px;color:#3399ff;letter-spacing:-0.158px;">Kopieren</div>
<svg class="r" style="left:834px;top:317px;" width="16" height="16" viewBox="0 0 16 16"><defs><linearGradient id="g32" x1="0" y1="0" x2="1" y2="0"><stop offset="0" stop-color="#b4b4b4"/><stop offset="1" stop-color="#8c8c8c"/></linearGradient></defs><rect x="0.6" y="1.8" width="10.4" height="13" rx="1.2" fill="url(#g32)" stroke="#6e6e6e" stroke-width="0.9"/><rect x="3.2" y="0.4" width="5.2" height="2.8" rx="0.8" fill="#c8c8c8" stroke="#6e6e6e" stroke-width="0.7"/><path d="M6.8 5 H12.8 L15.8 8 V16 H6.8Z" fill="#ededed" stroke="#7c7c7c" stroke-width="0.9" stroke-linejoin="round"/><path d="M12.8 5 V8 H15.8" fill="#fff" stroke="#7c7c7c" stroke-width="0.7" stroke-linejoin="round"/></svg>
<div class="t" id="t55" style="left:856.4px;top:319px;font-size:11.75px;line-height:13px;color:#444444;letter-spacing:0.05px;">Einfügen</div>
<svg class="r" style="left:834px;top:339px;" width="16" height="16" viewBox="0 0 16 16"><defs><linearGradient id="g34" x1="0" y1="0" x2="0" y2="1"><stop offset="0" stop-color="#ececec"/><stop offset="1" stop-color="#d8d8d8"/></linearGradient></defs><path d="M2 1 H14.6 Q15.7 1 15.7 2.2 V11.6 Q15.7 12.8 14.6 12.8 H9.200000000000001 L5.3999999999999995 16 V12.8 H2 Q0.9 12.8 0.9 11.6 V2.2 Q0.9 1 2 1Z" fill="#000" opacity="0.13"/><path d="M1.4 0.2 H13.6 Q14.8 0.2 14.8 1.4 V10.6 Q14.8 11.8 13.6 11.8 H8.4 L4.6 15 V11.8 H1.4 Q0.2 11.8 0.2 10.6 V1.4 Q0.2 0.2 1.4 0.2Z" fill="url(#g34)"/><rect x="2" y="4" width="11" height="1" fill="#a6a6a6"/><rect x="2" y="6" width="11" height="1" fill="#a6a6a6"/><rect x="2" y="8" width="11" height="1" fill="#a6a6a6"/><defs><linearGradient id="g33" x1="0" y1="0" x2="1" y2="1"><stop offset="0" stop-color="#ffe680"/><stop offset="1" stop-color="#f0b830"/></linearGradient></defs><g transform="translate(4,1)"><path d="M9.2 1.2 L11.6 3.4 L4.2 10.6 L1.6 8.4Z" fill="url(#g33)" stroke="#c08820" stroke-width="0.8"/><path d="M1.6 8.4 L4.2 10.6 L0.6 11.8Z" fill="#f2d8a8" stroke="#a07030" stroke-width="0.6"/><path d="M0.6 11.8 L1.7 11.4 L1 10.7Z" fill="#333"/><path d="M9.2 1.2 L10.2 0.4 L12.4 2.5 L11.6 3.4Z" fill="#e89088" stroke="#b06050" stroke-width="0.5"/></g></svg>
<div class="t" id="t56" style="left:856.4px;top:341px;font-size:11.75px;line-height:13px;color:#3399ff;letter-spacing:-0.254px;">Bearbeiten...</div>
<svg class="r" style="left:834px;top:361px;" width="16" height="16" viewBox="0 0 16 16"><defs><linearGradient id="g36" x1="0" y1="0" x2="0" y2="1"><stop offset="0" stop-color="#ececec"/><stop offset="1" stop-color="#d8d8d8"/></linearGradient></defs><path d="M2 1 H14.6 Q15.7 1 15.7 2.2 V11.6 Q15.7 12.8 14.6 12.8 H9.200000000000001 L5.3999999999999995 16 V12.8 H2 Q0.9 12.8 0.9 11.6 V2.2 Q0.9 1 2 1Z" fill="#000" opacity="0.13"/><path d="M1.4 0.2 H13.6 Q14.8 0.2 14.8 1.4 V10.6 Q14.8 11.8 13.6 11.8 H8.4 L4.6 15 V11.8 H1.4 Q0.2 11.8 0.2 10.6 V1.4 Q0.2 0.2 1.4 0.2Z" fill="url(#g36)"/><rect x="2" y="4" width="11" height="1" fill="#a6a6a6"/><rect x="2" y="6" width="11" height="1" fill="#a6a6a6"/><rect x="2" y="8" width="11" height="1" fill="#a6a6a6"/><defs><linearGradient id="g35" x1="0" y1="0" x2="0" y2="1"><stop offset="0" stop-color="#f0a860"/><stop offset="1" stop-color="#d87c28"/></linearGradient></defs><rect x="8.5" y="9.5" width="7.5" height="6" rx="0.8" fill="url(#g35)" stroke="#b8702c" stroke-width="0.8"/></svg>
<div class="t" id="t57" style="left:856.4px;top:363px;font-size:11.75px;line-height:13px;color:#3399ff;letter-spacing:-0.198px;">Archivieren</div>
<svg class="r" style="left:834px;top:383px;" width="16" height="16" viewBox="0 0 16 16"><defs><linearGradient id="g37" x1="0" y1="0" x2="0" y2="1"><stop offset="0" stop-color="#ececec"/><stop offset="1" stop-color="#d8d8d8"/></linearGradient></defs><path d="M2 1 H14.6 Q15.7 1 15.7 2.2 V11.6 Q15.7 12.8 14.6 12.8 H9.200000000000001 L5.3999999999999995 16 V12.8 H2 Q0.9 12.8 0.9 11.6 V2.2 Q0.9 1 2 1Z" fill="#000" opacity="0.13"/><path d="M1.4 0.2 H13.6 Q14.8 0.2 14.8 1.4 V10.6 Q14.8 11.8 13.6 11.8 H8.4 L4.6 15 V11.8 H1.4 Q0.2 11.8 0.2 10.6 V1.4 Q0.2 0.2 1.4 0.2Z" fill="url(#g37)"/><rect x="2" y="4" width="11" height="1" fill="#a6a6a6"/><rect x="2" y="6" width="11" height="1" fill="#a6a6a6"/><rect x="2" y="8" width="11" height="1" fill="#a6a6a6"/><circle cx="12.8" cy="12.4" r="3.8" fill="#e2701e"/><path d="M11.200000000000001 10.8 L14.4 14.0 M14.4 10.8 L11.200000000000001 14.0" stroke="#fff" stroke-width="1.3"/></svg>
<div class="t" id="t58" style="left:856.4px;top:385px;font-size:11.75px;line-height:13px;color:#3399ff;letter-spacing:-0.35px;">Löschen</div>
<svg class="r" style="left:834px;top:405px;" width="16" height="16" viewBox="0 0 16 16"><circle cx="8" cy="8" r="2.8" fill="#ee9090" stroke="#e01818" stroke-width="1.6"/></svg>
<div class="t" id="t59" style="left:856.4px;top:407px;font-size:11.75px;line-height:13px;color:#3399ff;letter-spacing:-0.157px;">Deaktivieren</div>
<svg class="r" style="left:834px;top:427px;" width="16" height="16" viewBox="0 0 16 16"><defs><linearGradient id="g38" x1="0" y1="0" x2="0" y2="1"><stop offset="0" stop-color="#ececec"/><stop offset="1" stop-color="#d8d8d8"/></linearGradient></defs><path d="M2 1 H14.1 Q15.2 1 15.2 2.2 V10.6 Q15.2 11.8 14.1 11.8 H9.200000000000001 L5.3999999999999995 15 V11.8 H2 Q0.9 11.8 0.9 10.6 V2.2 Q0.9 1 2 1Z" fill="#000" opacity="0.13"/><path d="M1.4 0.2 H13.1 Q14.3 0.2 14.3 1.4 V9.6 Q14.3 10.8 13.1 10.8 H8.4 L4.6 14 V10.8 H1.4 Q0.2 10.8 0.2 9.6 V1.4 Q0.2 0.2 1.4 0.2Z" fill="url(#g38)"/><rect x="2" y="7" width="10.5" height="1" fill="#a6a6a6"/><rect x="8.4" y="3" width="4.2" height="1" fill="#a6a6a6"/><rect x="8.4" y="5" width="4.2" height="1" fill="#a6a6a6"/><rect x="0.8" y="0.8" width="6.8" height="5.4" rx="1" fill="#484848"/><path d="M2.2 3.4 L3.8 4.9 L6.4 1.9" fill="none" stroke="#fff" stroke-width="1.1"/></svg>
<div class="t" id="t60" style="left:856.4px;top:429px;font-size:11.75px;line-height:13px;color:#444444;letter-spacing:-0.289px;">Jetzt abschliessen...</div>
<svg class="r" style="left:834px;top:449px;" width="16" height="16" viewBox="0 0 16 16"><defs><linearGradient id="g39" x1="0" y1="0" x2="0" y2="1"><stop offset="0" stop-color="#ececec"/><stop offset="1" stop-color="#d8d8d8"/></linearGradient></defs><path d="M2 1 H14.6 Q15.7 1 15.7 2.2 V11.6 Q15.7 12.8 14.6 12.8 H9.200000000000001 L5.3999999999999995 16 V12.8 H2 Q0.9 12.8 0.9 11.6 V2.2 Q0.9 1 2 1Z" fill="#000" opacity="0.13"/><path d="M1.4 0.2 H13.6 Q14.8 0.2 14.8 1.4 V10.6 Q14.8 11.8 13.6 11.8 H8.4 L4.6 15 V11.8 H1.4 Q0.2 11.8 0.2 10.6 V1.4 Q0.2 0.2 1.4 0.2Z" fill="url(#g39)"/><rect x="2" y="4" width="11" height="1" fill="#a6a6a6"/><rect x="2" y="6" width="11" height="1" fill="#a6a6a6"/><rect x="2" y="8" width="11" height="1" fill="#a6a6a6"/><rect x="9" y="11" width="2" height="4.6" fill="#e04848"/><rect x="11.2" y="9" width="2" height="6.6" fill="#4878d0"/><rect x="13.4" y="11.6" width="2" height="4" fill="#48a848"/></svg>
<div class="t" id="t61" style="left:856.4px;top:451px;font-size:11.75px;line-height:13px;color:#3399ff;letter-spacing:-0.106px;">Reichweite aktualisieren...</div>
<svg class="r" style="left:834px;top:471px;" width="16" height="16" viewBox="0 0 16 16"><rect x="1.2" y="2.5" width="13.2" height="12.6" rx="1" fill="#fff" stroke="#9a9a9a" stroke-width="0.9"/><path d="M1 3.4 Q1 2 2.4 2 H13.2 Q14.6 2 14.6 3.4 V7 H1Z" fill="#e02c2c"/><rect x="3.4" y="0.8" width="2.6" height="3.6" rx="1.2" fill="#eee" stroke="#999" stroke-width="0.5"/><rect x="9.6" y="0.8" width="2.6" height="3.6" rx="1.2" fill="#eee" stroke="#999" stroke-width="0.5"/><text x="7.2" y="13.4" font-size="6.6" font-family="Liberation Sans, sans-serif" text-anchor="middle" fill="#555">17</text><path d="M11 9.4 L15.8 12.7 L11 16Z" fill="#3a78e0" stroke="#2858b8" stroke-width="0.5"/></svg>
<div class="t" id="t62" style="left:856.4px;top:473px;font-size:11.75px;line-height:13px;color:#3399ff;letter-spacing:-0.235px;">Termin verschieben...</div>
<svg class="r" style="left:834px;top:493px;" width="16" height="16" viewBox="0 0 16 16"><path d="M0.4 8.2 Q8 0 15.8 8.2 Q8 15.6 0.4 8.2Z" fill="#f0d0b0" stroke="#d4a078" stroke-width="1.1"/><path d="M2 8.2 Q8 2.8 14.2 8.2 Q8 13.2 2 8.2Z" fill="#fff"/><circle cx="8" cy="8" r="3.2" fill="#6a98ec"/><circle cx="8" cy="8" r="1.4" fill="#0c1424"/></svg>
<div class="t" id="t63" style="left:856.4px;top:495px;font-size:11.75px;line-height:13px;color:#3399ff;letter-spacing:-0.295px;">Vorschau</div>
<svg class="r" style="left:834px;top:515px;" width="16" height="16" viewBox="0 0 16 16"><rect x="0.5" y="1.5" width="15" height="10" fill="#eaf2fc" stroke="#4a7cc8" stroke-width="0.9"/><path d="M0.5 1.5 L8.0 7.7 L15.5 1.5" fill="#fff" stroke="#4a7cc8" stroke-width="0.9"/><path d="M0.5 11.5 L5.8999999999999995 6.0 M15.5 11.5 L10.1 6.0" fill="none" stroke="#8fb2e4" stroke-width="0.7200000000000001"/><defs><linearGradient id="g40" x1="0" y1="0" x2="0" y2="1"><stop offset="0" stop-color="#b6dc98"/><stop offset="1" stop-color="#6cb24a"/></linearGradient></defs><path transform="translate(6,6.5)" d="M0.5 2.6 H4.6 V0.5 L9.5 4.5 L4.6 8.5 V6.4 H0.5Z" fill="url(#g40)" stroke="#3c8a1c" stroke-width="1" stroke-linejoin="round"/></svg>
<div class="t" id="t64" style="left:856.4px;top:517px;font-size:11.75px;line-height:13px;color:#3399ff;letter-spacing:-0.132px;">Externe Empfänger benachrichtigen...</div>
<svg class="r" style="left:834px;top:537px;" width="16" height="16" viewBox="0 0 16 16"><path d="M2.5 0.5 H11.0 L14.5 4.0 V15.5 H2.5Z" fill="#dce9fb" stroke="#3f74c8" stroke-width="0.9" stroke-linejoin="round"/><path d="M11.0 0.5 V4.0 H14.5" fill="#fff" stroke="#3f74c8" stroke-width="0.7" stroke-linejoin="round"/><defs><linearGradient id="g41" x1="0" y1="0" x2="0" y2="1"><stop offset="0" stop-color="#f2f2f2"/><stop offset="1" stop-color="#cfcfcf"/></linearGradient></defs><rect x="0.4" y="4" width="9.6" height="7.4" rx="1.2" fill="url(#g41)" stroke="#bdbdbd" stroke-width="0.5"/><defs><linearGradient id="g42" x1="0" y1="0" x2="0" y2="1"><stop offset="0" stop-color="#b6dc98"/><stop offset="1" stop-color="#6cb24a"/></linearGradient></defs><path transform="translate(6,6.8)" d="M0.5 2.6 H4.6 V0.5 L9.5 4.5 L4.6 8.5 V6.4 H0.5Z" fill="url(#g42)" stroke="#3c8a1c" stroke-width="1" stroke-linejoin="round"/></svg>
<div class="t" id="t65" style="left:856.4px;top:539px;font-size:11.75px;line-height:13px;color:#3399ff;letter-spacing:-0.124px;">Vorlage erstellen...</div>
<svg class="r" style="left:834px;top:559px;" width="16" height="16" viewBox="0 0 16 16"><path d="M2.5 0.5 H11.0 L14.5 4.0 V15.5 H2.5Z" fill="#dce9fb" stroke="#3f74c8" stroke-width="0.9" stroke-linejoin="round"/><path d="M11.0 0.5 V4.0 H14.5" fill="#fff" stroke="#3f74c8" stroke-width="0.7" stroke-linejoin="round"/><defs><linearGradient id="g43" x1="0" y1="0" x2="0" y2="1"><stop offset="0" stop-color="#f2f2f2"/><stop offset="1" stop-color="#cfcfcf"/></linearGradient></defs><rect x="0.4" y="4" width="9.6" height="7.4" rx="1.2" fill="url(#g43)" stroke="#bdbdbd" stroke-width="0.5"/><defs><linearGradient id="g44" x1="0" y1="0" x2="0" y2="1"><stop offset="0" stop-color="#b6dc98"/><stop offset="1" stop-color="#6cb24a"/></linearGradient></defs><path transform="translate(6,6.8)" d="M0.5 2.6 H4.6 V0.5 L9.5 4.5 L4.6 8.5 V6.4 H0.5Z" fill="url(#g44)" stroke="#3c8a1c" stroke-width="1" stroke-linejoin="round"/></svg>
<div class="t" id="t66" style="left:856.4px;top:561px;font-size:11.75px;line-height:13px;color:#3399ff;letter-spacing:-0.184px;">Exportieren...</div>
<svg class="r" style="left:834px;top:588px;" width="16" height="16" viewBox="0 0 16 16"><defs><linearGradient id="g45" x1="0" y1="0" x2="0" y2="1"><stop offset="0" stop-color="#7cc4fa"/><stop offset="1" stop-color="#4a9ce8"/></linearGradient></defs><path d="M3.2 0.4 L8 5 L12.8 0.4" fill="none" stroke="#555" stroke-width="1.1"/><rect x="0.8" y="4.8" width="14.4" height="11" rx="0.8" fill="#3a3a3a"/><rect x="1.8" y="5.6" width="12.4" height="7.6" fill="url(#g45)"/><rect x="2.6" y="14" width="1.6" height="1.1" fill="#f03030"/><rect x="5.4" y="14.2" width="8" height="0.8" fill="#777"/></svg>
<div class="t" id="t67" style="left:856.4px;top:590px;font-size:11.75px;line-height:13px;color:#3399ff;letter-spacing:-0.073px;">Video-Tutorials ansehen...</div>
<div class="r" style="left:831px;top:266px;width:237px;height:1px;background:#d2d2d2;"></div>
<div class="r" style="left:831px;top:581px;width:237px;height:1px;background:#d2d2d2;"></div>
<div class="r" style="left:827px;top:610px;width:254px;height:5px;background:#f0f0f0;"></div>
<div class="r" style="left:948px;top:612px;width:12px;height:3px;background:#fafafa;"></div>
<div class="r" style="left:949px;top:613px;width:2px;height:2px;background:#7c7c7c;"></div>
<div class="r" style="left:953px;top:613px;width:2px;height:2px;background:#7c7c7c;"></div>
<div class="r" style="left:957px;top:613px;width:2px;height:2px;background:#7c7c7c;"></div>
<div class="r" style="left:827px;top:615px;width:254px;height:23px;background:#c0c0c0;"></div>
<div class="t" id="t68" style="left:829.7px;top:620px;font-size:11.75px;line-height:13px;color:#000;font-weight:bold;-webkit-text-stroke:0.12px;letter-spacing:-0.244px;">Information</div>
<div class="r" style="left:827px;top:638px;width:254px;height:138px;background:#ffffe1;"></div>
<svg class="r" style="left:835px;top:647px;" width="14" height="14" viewBox="0 0 14 14"><defs><linearGradient id="g46" x1="0" y1="0" x2="0" y2="1"><stop offset="0" stop-color="#8fb4e8"/><stop offset="1" stop-color="#3c6cb8"/></linearGradient></defs><circle cx="7" cy="7" r="6.6" fill="url(#g46)" stroke="#c4d4ec" stroke-width="1"/><circle cx="7" cy="7" r="7" fill="none" stroke="#8098c0" stroke-width="0.5"/><circle cx="7" cy="3.8" r="1.05" fill="#fff"/><path d="M5.6 6 H7.9 V10 H8.7 V10.9 H5.5 V10 H6.3 V6.9 H5.6Z" fill="#fff"/></svg>
<div class="t" id="t69" style="left:854.2px;top:648px;font-size:11.75px;line-height:13px;color:#000;-webkit-text-stroke:0.12px;letter-spacing:0.021px;">Die Hinweisgruppe <a style="text-decoration:underline">Default</a> enthält noch</div>
<div class="t" id="t70" style="left:854.4px;top:663px;font-size:11.75px;line-height:13px;color:#000;-webkit-text-stroke:0.12px;letter-spacing:0.048px;">nicht veröffentlichte Änderungen.</div>
<div class="r" style="left:0px;top:780px;width:1086px;height:23px;background:#faebd7;"></div>
<div class="t" id="t71" style="left:5.8px;top:785px;font-size:11.75px;line-height:13px;color:#585858;letter-spacing:0.257px;">C:\IBI-aws\Admin\Data.xml</div>
<div class="r" style="left:1081px;top:790px;width:2px;height:2px;background:#ffffff;"></div>
<div class="r" style="left:1080px;top:789px;width:2px;height:2px;background:#808080;"></div>
<div class="r" style="left:1077px;top:794px;width:2px;height:2px;background:#ffffff;"></div>
<div class="r" style="left:1076px;top:793px;width:2px;height:2px;background:#808080;"></div>
<div class="r" style="left:1081px;top:794px;width:2px;height:2px;background:#ffffff;"></div>
<div class="r" style="left:1080px;top:793px;width:2px;height:2px;background:#808080;"></div>
<div class="r" style="left:1073px;top:798px;width:2px;height:2px;background:#ffffff;"></div>
<div class="r" style="left:1072px;top:797px;width:2px;height:2px;background:#808080;"></div>
<div class="r" style="left:1077px;top:798px;width:2px;height:2px;background:#ffffff;"></div>
<div class="r" style="left:1076px;top:797px;width:2px;height:2px;background:#808080;"></div>
<div class="r" style="left:1081px;top:798px;width:2px;height:2px;background:#ffffff;"></div>
<div class="r" style="left:1080px;top:797px;width:2px;height:2px;background:#808080;"></div>
<div class="r" style="left:0px;top:0px;width:1086px;height:1px;background:#6d8699;"></div>
<div class="r" style="left:0px;top:0px;width:1px;height:803px;background:#6d8699;"></div>
<div class="r" style="left:1085px;top:0px;width:1px;height:25px;background:#607d94;"></div>
<div class="r" style="left:1085px;top:25px;width:1px;height:30px;background:#b4b4b4;"></div>
<div class="r" style="left:1085px;top:55px;width:1px;height:748px;background:#2c2c2c;"></div>
<div class="r" style="left:0px;top:802px;width:1086px;height:1px;background:#8a8f94;"></div>
</body></html>
